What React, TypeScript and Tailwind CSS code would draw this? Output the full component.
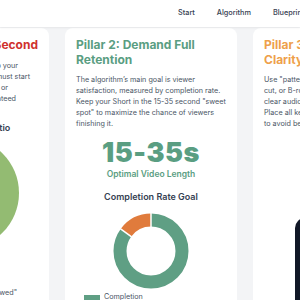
import React from "react";

function Donut() {
  const r = 31;
  const c = 2 * Math.PI * r;
  const green = 0.85 * c;
  const a = (54 * Math.PI) / 180;
  return (
    <svg width="76" height="76" viewBox="0 0 76 76" className="block w-[76px] h-[76px] shrink-0">
      <g transform="rotate(-90 38 38)">
        <circle cx="38" cy="38" r={r} fill="none" stroke="#5f9f84" strokeWidth="13" strokeDasharray={`${green} ${c}`} />
        <circle cx="38" cy="38" r={r} fill="none" stroke="#e07b3c" strokeWidth="13" strokeDasharray={`${c - green} ${c}`} strokeDashoffset={-green} />
      </g>
      <line x1="38" y1="0" x2="38" y2="14" stroke="#fff" strokeWidth="1.5" />
      <line x1={38 - 24 * Math.sin(a)} y1={38 - 24 * Math.cos(a)} x2={38 - 38 * Math.sin(a)} y2={38 - 38 * Math.cos(a)} stroke="#fff" strokeWidth="1.5" />
    </svg>
  );
}

export default function App() {
  return (
    <div className="w-[300px] h-[300px] overflow-hidden bg-[#f3f4f6] font-['Inter',sans-serif]">
      <header className="relative z-10 h-[27px] bg-white shadow-[0_1px_2px_rgba(0,0,0,0.06)] flex items-center pl-[178px] gap-[22px] whitespace-nowrap text-[7.3px] font-medium text-gray-700">
        <span>Start</span>
        <span>Algorithm</span>
        <span>Blueprint</span>
      </header>
      <div className="flex gap-[16px] ml-[-123px] mt-px">
        {/* Left card */}
        <div className="w-[172px] shrink-0 h-[420px] bg-white rounded-lg px-[11px] pt-[10px]">
          <div className="flex justify-end whitespace-nowrap text-[12px] leading-[14.5px] font-bold text-[#d0312d]">
            Pillar 1: Win the First Second
          </div>
          <div className="mt-[7px] text-[7.2px] leading-[11.3px] text-gray-600 text-right whitespace-nowrap">
            <div className="mr-[20px]">Your first frame must grab your</div>
            <div className="mr-[8px]">attention instantly. You must start</div>
            <div className="mr-[30px]">with a bold claim, visual, or</div>
            <div className="mr-[22px]">question that is guaranteed</div>
          </div>
          <div className="mt-[17px] pr-[12px] text-center text-[9px] leading-[12px] font-semibold text-gray-700 whitespace-nowrap">
            Viewed vs. Swiped Ratio
          </div>
          <div className="mt-[3px] flex justify-center">
            <svg width="112" height="112" viewBox="0 0 112 112" className="block w-[112px] h-[112px] shrink-0">
              <circle cx="56" cy="56" r="56" fill="#93bb72" />
            </svg>
          </div>
          <div className="mt-[39px] text-[7.2px] leading-[10px] text-gray-600 text-right mr-[21px] whitespace-nowrap">
            "Swiped" &nbsp; "Viewed"
          </div>
        </div>

        {/* Middle card */}
        <div className="w-[172px] shrink-0 h-[420px] bg-white rounded-lg px-[11px] pt-[10px]">
          <h2 className="text-[12px] leading-[14.5px] font-bold text-[#5a9e82]">
            Pillar 2: Demand Full Retention
          </h2>
          <p className="mt-[7px] text-[7.2px] leading-[11px] text-gray-600 whitespace-nowrap">
            The algorithm’s main goal is viewer
            <br />
            satisfaction, measured by completion rate.
            <br />
            Keep your Short in the 15-35 second "sweet
            <br />
            spot" to maximize the chance of viewers
            <br />
            finishing it.
          </p>
          <div className="mt-[9px] text-center text-[27px] leading-[30px] font-black text-[#5a9e82] tracking-[0.5px]">
            15-35s
          </div>
          <div className="text-center text-[8.5px] leading-[12px] font-semibold text-[#5a9e82]">
            Optimal Video Length
          </div>
          <div className="mt-[11px] text-center text-[9px] leading-[12px] font-semibold text-gray-700">
            Completion Rate Goal
          </div>
          <div className="mt-[10px] h-[76px] flex justify-center">
            <Donut />
          </div>
          <div className="mt-[3px] flex items-center gap-[4px] pl-[8px]">
            <span className="w-[16px] h-[5px] bg-[#5f9f84]" />
            <span className="text-[7.2px] leading-[10px] text-gray-600">Completion</span>
          </div>
        </div>

        {/* Right card */}
        <div className="w-[172px] shrink-0 h-[420px] bg-white rounded-lg px-[11px] pt-[10px]">
          <h2 className="text-[12px] leading-[14.5px] font-bold text-[#eea04a]">
            Pillar 3: Maximize Visual
            <br />
            Clarity
          </h2>
          <p className="mt-[7px] text-[7.2px] leading-[11px] text-gray-600 whitespace-nowrap">
            Use "pattern interrupts" (a zoom, jump
            <br />
            cut, or B-roll) every few seconds and
            <br />
            clear audio with on-screen captions.
            <br />
            Place all key text inside the safe zone
            <br />
            to avoid being covered by the UI.
          </p>
          <div className="mt-[89px] flex justify-center">
            <div className="w-[88px] h-[180px] rounded-[10px] bg-[#111827]" />
          </div>
        </div>
      </div>
    </div>
  );
}
